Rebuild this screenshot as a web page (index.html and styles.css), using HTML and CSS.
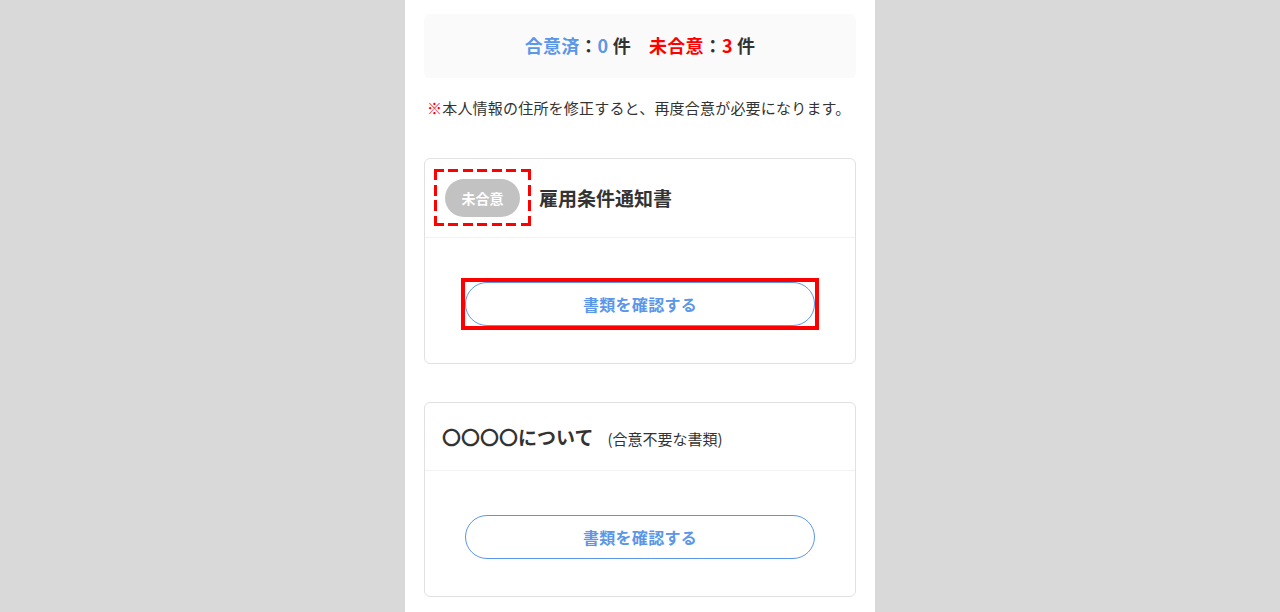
FILE: index.html
```html
<!DOCTYPE html>
<html lang="ja">
<head>
<meta charset="utf-8">
<title>書類一覧</title>
<link rel="stylesheet" href="styles.css">
</head>
<body>
<main class="column">
  <section class="summary">
    <p class="summary-text"><span class="agreed">合意済</span>：<span class="agreed">0</span> 件　<span class="pending">未合意</span>：<span class="pending">3</span> 件</p>
  </section>
  <p class="note"><span class="mark">※</span>本人情報の住所を修正すると、再度合意が必要になります。</p>

  <article class="card">
    <header class="card-head">
      <span class="badge annotated-dash">未合意</span>
      <h2 class="card-title">雇用条件通知書</h2>
    </header>
    <div class="card-body">
      <button class="doc-btn annotated-solid" type="button">書類を確認する</button>
    </div>
  </article>

  <article class="card">
    <header class="card-head plain">
      <h2 class="card-title">〇〇〇〇について<span class="sub">(合意不要な書類)</span></h2>
    </header>
    <div class="card-body">
      <button class="doc-btn" type="button">書類を確認する</button>
    </div>
  </article>
</main>
</body>
</html>
```
FILE: styles.css
```css
* { box-sizing: border-box; }
html, body { margin: 0; padding: 0; }
body {
  background: #d9d9d9;
  font-family: "Noto Sans CJK JP", "Noto Sans", sans-serif;
  color: #333;
}
.column {
  width: 470px;
  margin: 0 auto;
  background: #fff;
  min-height: 640px;
  padding: 14px 19px 20px 19px;
}
.summary {
  background: #fafafa;
  border-radius: 6px;
  height: 64px;
  display: flex;
  align-items: center;
  justify-content: center;
  padding-bottom: 3px;
}
.summary-text {
  margin: 0;
  font-size: 18px;
  line-height: 26px;
  font-weight: 700;
  letter-spacing: 0.2px;
  color: #333;
  white-space: nowrap;
}
.summary-text .agreed { color: #5b96e8; }
.summary-text .pending { color: #ff0000; }
.note {
  margin: 19px 0 0;
  padding-left: 3px;
  font-size: 15px;
  line-height: 22px;
  letter-spacing: 0.2px;
  color: #333;
  white-space: nowrap;
}
.note .mark { color: #ff0000; font-weight: 700; }
.card {
  border: 1px solid #e1e1e1;
  border-radius: 6px;
  margin-top: 39px;
  background: #fff;
}
.card + .card { margin-top: 38px; }
.card-head {
  display: flex;
  align-items: center;
  gap: 19px;
  padding: 20px 17px 20px 20px;
  border-bottom: 1px solid #f2f2f2;
}
.card-head.plain { padding: 20px 17px 19px 17px; }
.card-title {
  margin: 0;
  font-size: 19px;
  line-height: 28px;
  font-weight: 700;
  color: #333;
}
.card-title .sub {
  font-size: 15px;
  line-height: 1;
  font-weight: 400;
  margin-left: 14px;
}
.badge {
  position: relative;
  display: inline-flex;
  align-items: center;
  justify-content: center;
  flex: none;
  width: 75px;
  height: 38px;
  border-radius: 19px;
  background: #c2c2c2;
  color: #fff;
  font-size: 14px;
  font-weight: 700;
}
.annotated-dash::after {
  content: "";
  position: absolute;
  top: -10px;
  bottom: -9px;
  left: -11px;
  right: -11px;
  background:
    repeating-linear-gradient(90deg, #ff0000 0 10px, transparent 10px 14.5px) left top / 100% 3px no-repeat,
    repeating-linear-gradient(90deg, #ff0000 0 10px, transparent 10px 14.5px) left bottom / 100% 3px no-repeat,
    repeating-linear-gradient(180deg, #ff0000 0 11px, transparent 11px 15.5px) left top / 3px 100% no-repeat,
    repeating-linear-gradient(180deg, #ff0000 0 11px, transparent 11px 15.5px) right top / 3px 100% no-repeat;
}
.card-body {
  padding: 44px 40px 37px;
}
.doc-btn {
  position: relative;
  display: block;
  width: 100%;
  height: 44px;
  border: 1px solid #5b96e8;
  border-radius: 22px;
  background: #fff;
  color: #5b96e8;
  font-family: inherit;
  font-size: 16px;
  letter-spacing: 0.3px;
  font-weight: 700;
  cursor: pointer;
}
.annotated-solid::after {
  content: "";
  position: absolute;
  top: -5px;
  bottom: -5px;
  left: -5px;
  right: -5px;
  border: 4px solid #ff0000;
}
```
